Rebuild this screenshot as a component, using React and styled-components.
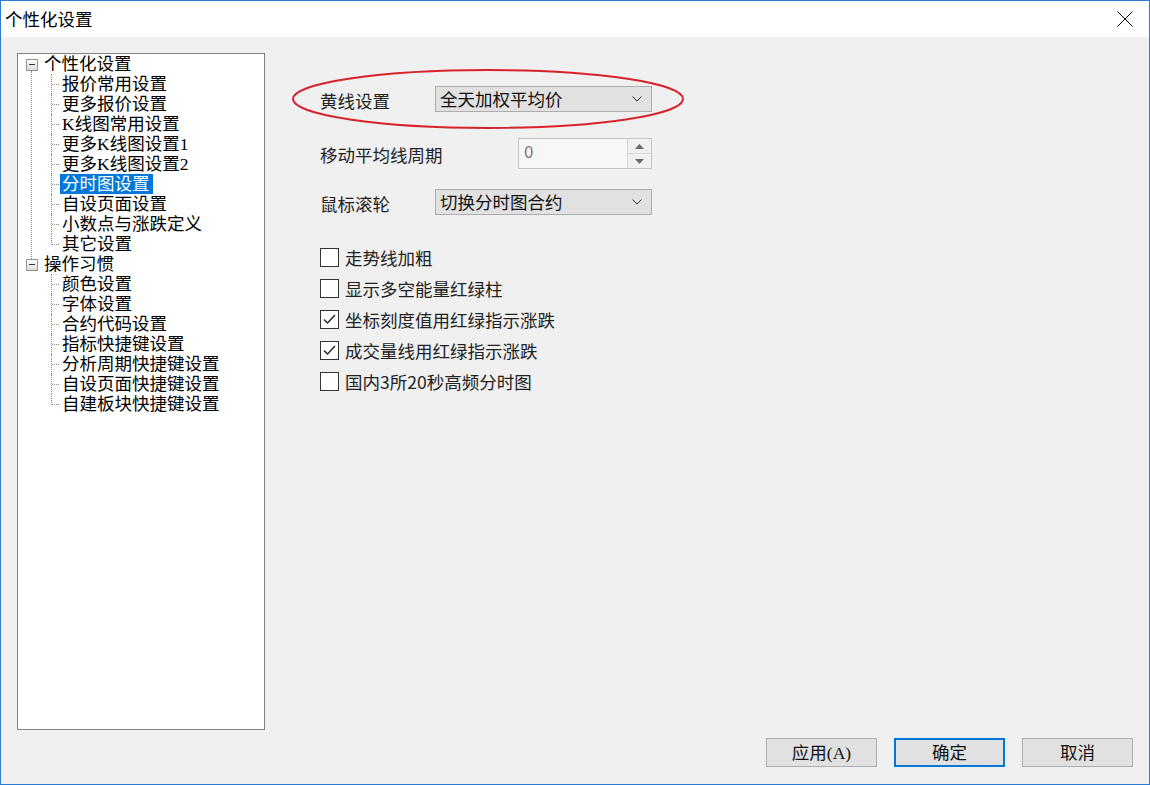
import styled, { createGlobalStyle } from "styled-components";

const GlobalStyle = createGlobalStyle`
  html, body {
    margin: 0;
    padding: 0;
    background: #f0f0f0;
  }
  * {
    box-sizing: border-box;
  }
`;

const SANS = `"Noto Sans CJK SC", "Noto Sans", sans-serif`;
const SONG = `"Liberation Serif", "Noto Sans CJK SC", serif`;

const Window = styled.div`
  width: 1150px;
  height: 785px;
  border: 1px solid #2b7bd2;
  background: #f0f0f0;
  display: flex;
  flex-direction: column;
  font-family: ${SANS};
  color: #1a1a1a;
  overflow: hidden;
`;

const TitleBar = styled.div`
  height: 36px;
  background: #fff;
  display: flex;
  align-items: center;
  justify-content: space-between;
  padding: 0 16px 0 4px;
`;

const Title = styled.span`
  font-size: 17.5px;
  line-height: 20px;
  color: #000;
`;

const CloseIcon = styled.svg`
  width: 16px;
  height: 16px;
  display: block;
`;

const Body = styled.div`
  flex: 1;
  display: flex;
  flex-direction: column;
  padding: 16px 16px 17px 16px;
`;

const Main = styled.div`
  flex: 1;
  display: flex;
`;

const TreePanel = styled.div`
  width: 248px;
  border: 1px solid #828282;
  background: #fff;
  font-family: ${SONG};
  font-size: 17.5px;
  color: #000;
`;

const RootGroup = styled.div`
  position: relative;
  &::before {
    content: "";
    display: ${(p) => (p.$hasNext ? "block" : "none")};
    position: absolute;
    left: 13px;
    top: 17px;
    height: calc(100% - 12px);
    border-left: 1px dotted #8a8a8a;
  }
`;

const TreeRow = styled.div`
  position: relative;
  height: 20px;
  display: flex;
  align-items: center;
  padding-left: ${(p) => (p.$child ? "42px" : "24px")};

  ${(p) =>
    p.$child &&
    `
    &::before {
      content: "";
      position: absolute;
      left: 33px;
      top: 0;
      height: ${p.$last ? "11px" : "20px"};
      border-left: 1px dotted #8a8a8a;
    }
    &::after {
      content: "";
      position: absolute;
      left: 34px;
      top: 10px;
      width: 7px;
      border-top: 1px dotted #8a8a8a;
    }
  `}
`;

const Expander = styled.span`
  position: absolute;
  left: 8px;
  top: 5px;
  width: 12px;
  height: 12px;
  border: 1px solid #919191;
  background: linear-gradient(#ffffff, #dcdcdc);
  &::after {
    content: "";
    position: absolute;
    left: 2px;
    top: 4px;
    width: 6px;
    height: 1px;
    background: #333;
  }
`;

const NodeLabel = styled.span`
  line-height: 20px;
  height: 20px;
  padding: 0 3px 0 2px;
  white-space: nowrap;
  background: ${(p) => (p.$selected ? "#0078d7" : "transparent")};
  color: ${(p) => (p.$selected ? "#fff" : "#000")};
`;

const Settings = styled.div`
  flex: 1;
  position: relative;
  padding: 33px 0 0 55px;
  font-size: 17.5px;
`;

const Ellipse = styled.svg`
  position: absolute;
  left: 26px;
  top: 15px;
  width: 394px;
  height: 62px;
  pointer-events: none;
`;

const FieldRow = styled.div`
  display: flex;
  align-items: center;
  margin-top: ${(p) => p.$top || 0}px;
`;

const FieldLabel = styled.span`
  width: ${(p) => p.$width}px;
  line-height: 20px;
  padding-top: 3px;
  color: #222;
`;

const Combo = styled.div`
  width: 217px;
  height: 26px;
  border: 1px solid #adadad;
  background: #e1e1e1;
  display: flex;
  align-items: center;
  justify-content: space-between;
  padding: 0 9px 0 4px;
  color: #111;
  line-height: 20px;
`;

const Chevron = styled.svg`
  width: 10px;
  height: 6px;
  display: block;
`;

const SpinBox = styled.div`
  width: 134px;
  height: 31px;
  border: 1px solid #c4c4c4;
  background: #f7f7f7;
  display: flex;
`;

const SpinValue = styled.span`
  flex: 1;
  padding: 2px 0 0 5px;
  color: #7a7a7a;
  font-size: 17px;
  line-height: 20px;
`;

const SpinButtons = styled.div`
  width: 24px;
  display: flex;
  flex-direction: column;
  border-left: 1px solid #d6d6d6;
`;

const SpinHalf = styled.div`
  flex: 1;
  display: flex;
  align-items: center;
  justify-content: center;
  background: #f0f0f0;
  & + & {
    border-top: 1px solid #d6d6d6;
  }
`;

const CheckList = styled.div`
  margin-top: 27px;
  display: flex;
  flex-direction: column;
`;

const CheckRow = styled.label`
  height: 31px;
  display: flex;
  align-items: center;
  gap: 6px;
  color: #222;
  line-height: 20px;
`;

const Box = styled.span`
  width: 19px;
  height: 19px;
  border: 1px solid #333;
  background: #fff;
  display: flex;
  align-items: center;
  justify-content: center;
`;

const ButtonRow = styled.div`
  margin-top: 8px;
  display: flex;
  justify-content: flex-end;
  gap: 17px;
`;

const Button = styled.button`
  width: 111px;
  height: 29px;
  border: ${(p) => (p.$primary ? "2px solid #0078d7" : "1px solid #adadad")};
  background: #e1e1e1;
  font-family: ${SONG};
  font-size: 17.5px;
  line-height: 20px;
  color: #111;
  padding: 0;
`;

const tree = [
  {
    label: "个性化设置",
    children: [
      "报价常用设置",
      "更多报价设置",
      "K线图常用设置",
      "更多K线图设置1",
      "更多K线图设置2",
      "分时图设置",
      "自设页面设置",
      "小数点与涨跌定义",
      "其它设置",
    ],
  },
  {
    label: "操作习惯",
    children: [
      "颜色设置",
      "字体设置",
      "合约代码设置",
      "指标快捷键设置",
      "分析周期快捷键设置",
      "自设页面快捷键设置",
      "自建板块快捷键设置",
    ],
  },
];

const checks = [
  { label: "走势线加粗", checked: false },
  { label: "显示多空能量红绿柱", checked: false },
  { label: "坐标刻度值用红绿指示涨跌", checked: true },
  { label: "成交量线用红绿指示涨跌", checked: true },
  { label: "国内3所20秒高频分时图", checked: false },
];

function ChevronDown() {
  return (
    <Chevron viewBox="0 0 10 6">
      <polyline points="0.5,0.5 5,5 9.5,0.5" fill="none" stroke="#333" strokeWidth="1" />
    </Chevron>
  );
}

function App() {
  return (
    <Window>
      <GlobalStyle />
      <TitleBar>
        <Title>个性化设置</Title>
        <CloseIcon viewBox="0 0 16 16">
          <path d="M0.5 0.5 L15.5 15.5 M15.5 0.5 L0.5 15.5" stroke="#000" strokeWidth="1" />
        </CloseIcon>
      </TitleBar>
      <Body>
        <Main>
          <TreePanel>
            {tree.map((group, gi) => (
              <RootGroup key={group.label} $hasNext={gi < tree.length - 1}>
                <TreeRow>
                  <Expander />
                  <NodeLabel>{group.label}</NodeLabel>
                </TreeRow>
                {group.children.map((child, ci) => (
                  <TreeRow key={child} $child $last={ci === group.children.length - 1}>
                    <NodeLabel $selected={child === "分时图设置"}>{child}</NodeLabel>
                  </TreeRow>
                ))}
              </RootGroup>
            ))}
          </TreePanel>
          <Settings>
            <FieldRow>
              <FieldLabel $width={115}>黄线设置</FieldLabel>
              <Combo>
                <span>全天加权平均价</span>
                <ChevronDown />
              </Combo>
            </FieldRow>
            <FieldRow $top={26}>
              <FieldLabel $width={198}>移动平均线周期</FieldLabel>
              <SpinBox>
                <SpinValue>0</SpinValue>
                <SpinButtons>
                  <SpinHalf>
                    <svg width="9" height="5" viewBox="0 0 9 5">
                      <polygon points="0,5 4.5,0 9,5" fill="#6a6a6a" />
                    </svg>
                  </SpinHalf>
                  <SpinHalf>
                    <svg width="9" height="5" viewBox="0 0 9 5">
                      <polygon points="0,0 4.5,5 9,0" fill="#6a6a6a" />
                    </svg>
                  </SpinHalf>
                </SpinButtons>
              </SpinBox>
            </FieldRow>
            <FieldRow $top={20}>
              <FieldLabel $width={115}>鼠标滚轮</FieldLabel>
              <Combo>
                <span>切换分时图合约</span>
                <ChevronDown />
              </Combo>
            </FieldRow>
            <CheckList>
              {checks.map((c) => (
                <CheckRow key={c.label}>
                  <Box>
                    {c.checked && (
                      <svg width="15" height="15" viewBox="0 0 15 15">
                        <polyline points="2,7.5 5.5,11 13,3" fill="none" stroke="#222" strokeWidth="1.4" />
                      </svg>
                    )}
                  </Box>
                  <span>{c.label}</span>
                </CheckRow>
              ))}
            </CheckList>
            <Ellipse viewBox="0 0 394 62">
              <ellipse cx="197" cy="31" rx="195" ry="29" fill="none" stroke="#d8232c" strokeWidth="2" />
            </Ellipse>
          </Settings>
        </Main>
        <ButtonRow>
          <Button>应用(A)</Button>
          <Button $primary>确定</Button>
          <Button>取消</Button>
        </ButtonRow>
      </Body>
    </Window>
  );
}

export default App;
